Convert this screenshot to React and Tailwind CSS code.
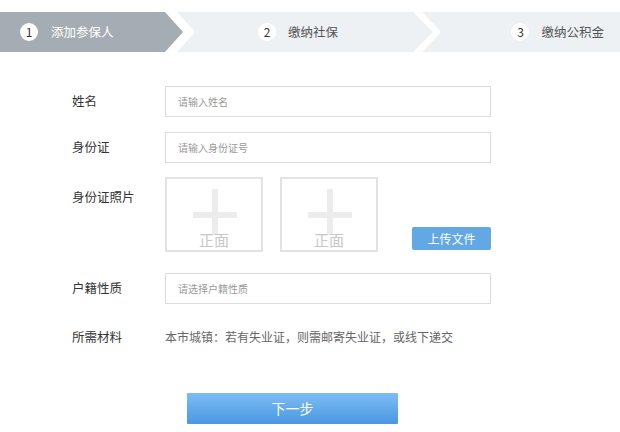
export default function App() {
  const font = { fontFamily: '"Noto Sans CJK SC", "Noto Sans", sans-serif' };
  return (
    <div className="w-[620px] h-[432px] bg-white overflow-hidden" style={font}>
      {/* steps */}
      <div className="mt-[12px] flex h-[40px]">
        <div className="w-[183px] h-[40px] shrink-0 bg-[#a5acb4] flex items-center pl-[20px] gap-[13px] [clip-path:polygon(0_0,165px_0,183px_20px,165px_40px,0_40px)]">
          <span className="w-[18px] h-[18px] rounded-full bg-white flex items-center justify-center text-[12px] leading-none text-[#333]">1</span>
          <span className="text-[12.5px] text-white leading-none">添加参保人</span>
        </div>
        <div className="ml-[-6px] w-[256px] h-[40px] shrink-0 bg-[#eef1f4] flex items-center pl-[81px] gap-[12px] [clip-path:polygon(0_0,236px_0,256px_20px,236px_40px,0_40px,18px_20px)]">
          <span className="w-[18px] h-[18px] rounded-full bg-white flex items-center justify-center text-[12px] leading-none text-[#333]">2</span>
          <span className="text-[12.5px] text-[#555] leading-none">缴纳社保</span>
        </div>
        <div className="ml-[-11px] flex-1 h-[40px] bg-[#eef1f4] flex items-center justify-end pr-[16px] gap-[12px] [clip-path:polygon(0_0,100%_0,100%_100%,0_100%,19px_20px)]">
          <span className="w-[18px] h-[18px] rounded-full bg-white flex items-center justify-center text-[12px] leading-none text-[#333]">3</span>
          <span className="text-[12.5px] text-[#555] leading-none">缴纳公积金</span>
        </div>
      </div>

      {/* form */}
      <div className="pl-[72px] mt-[34px]">
        <div className="flex items-center h-[31px]">
          <div className="w-[93px] text-[12.5px] text-[#333]">姓名</div>
          <div className="w-[326px] h-[31px] border border-[#dcdcdc] flex items-center pl-[12px] text-[10px] text-[#999]">请输入姓名</div>
        </div>
        <div className="flex items-center h-[31px] mt-[15px]">
          <div className="w-[93px] text-[12.5px] text-[#333]">身份证</div>
          <div className="w-[326px] h-[31px] border border-[#dcdcdc] flex items-center pl-[12px] text-[10px] text-[#999]">请输入身份证号</div>
        </div>
        <div className="flex mt-[14px] h-[75px]">
          <div className="w-[93px] text-[12.5px] text-[#333] pt-[10px] leading-[20px]">身份证照片</div>
          <div className="w-[326px] flex items-end">
            {[0, 1].map((i) => (
              <div key={i} className={`relative w-[98px] h-[75px] border-2 border-[#e2e2e2] flex flex-col items-center ${i === 1 ? 'ml-[17px]' : ''}`}>
                <div className="absolute left-[26px] top-[33px] w-[44px] h-[6px] bg-[#ececec]" />
                <div className="absolute left-[45px] top-[10px] w-[6px] h-[46px] bg-[#ececec]" />
                <div className="absolute left-0 right-0 bottom-[0px] text-center text-[15px] leading-[20px] text-[#c8c8c8]">正面</div>
              </div>
            ))}
            <div className="ml-auto mb-[2px] w-[79px] h-[23px] rounded-[2px] bg-[#62a8e4] text-white text-[12px] flex items-center justify-center">上传文件</div>
          </div>
        </div>
        <div className="flex items-center h-[31px] mt-[21px]">
          <div className="w-[93px] text-[12.5px] text-[#333]">户籍性质</div>
          <div className="w-[326px] h-[31px] border border-[#dcdcdc] flex items-center pl-[12px] text-[10px] text-[#999]">请选择户籍性质</div>
        </div>
        <div className="flex items-center h-[20px] mt-[23px]">
          <div className="w-[93px] text-[12.5px] text-[#333]">所需材料</div>
          <div className="text-[12px] text-[#666]">本市城镇：若有失业证，则需邮寄失业证，或线下递交</div>
        </div>
      </div>

      <div className="mt-[46px] ml-[187px] w-[211px] h-[31px] bg-gradient-to-b from-[#7cbdf6] to-[#4a97e0] text-white text-[14px] flex items-center justify-center rounded-[1px]">下一步</div>
    </div>
  );
}
